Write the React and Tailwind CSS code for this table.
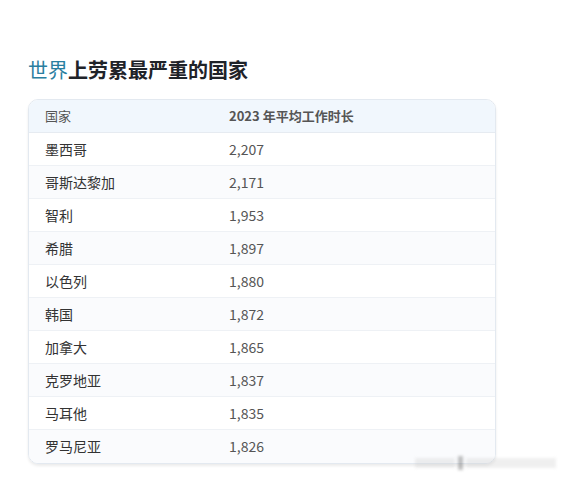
const rows = [
  ['墨西哥', '2,207'],
  ['哥斯达黎加', '2,171'],
  ['智利', '1,953'],
  ['希腊', '1,897'],
  ['以色列', '1,880'],
  ['韩国', '1,872'],
  ['加拿大', '1,865'],
  ['克罗地亚', '1,837'],
  ['马耳他', '1,835'],
  ['罗马尼亚', '1,826'],
];

export default function App() {
  return (
    <div
      className="relative w-[567px] h-[483px] bg-white overflow-hidden"
      style={{ fontFamily: '"Noto Sans CJK SC", "Noto Sans", sans-serif' }}
    >
      <div className="pl-[28px] pt-[56px]">
        <h1 className="text-[20px] leading-[28px] font-bold text-[#1f2329]">
          <span className="font-normal text-[#2a7ea0]">世界</span>上劳累最严重的国家
        </h1>

        <div className="mt-[15px] w-[468px] rounded-[10px] border border-[#e3e9f0] overflow-hidden shadow-[0_2px_3px_rgba(0,0,0,0.08)]">
          <div className="flex h-[33px] items-center bg-[#f1f7fd] border-b border-[#e6ebf1] text-[13px] text-[#555]">
            <div className="w-[200px] pl-[16px]">国家</div>
            <div className="font-bold">2023 年平均工作时长</div>
          </div>
          {rows.map(([name, hours], i) => (
            <div
              key={name}
              className={
                'flex h-[33px] items-center text-[14px] text-[#333] ' +
                (i % 2 === 1 ? 'bg-[#fafbfd] ' : 'bg-white ') +
                (i < rows.length - 1 ? 'border-b border-[#eef1f5]' : '')
              }
            >
              <div className="w-[200px] pl-[16px]">{name}</div>
              <div className="text-[#555]">{hours}</div>
            </div>
          ))}
        </div>
      </div>

      {/* faint watermark */}
      <div className="absolute left-[415px] top-[456px] flex items-center gap-[3px] opacity-30 blur-[1.5px]">
        <div className="w-[40px] h-[10px] bg-[#ccc]" />
        <div className="w-[5px] h-[14px] bg-[#333]" />
        <div className="w-[90px] h-[10px] bg-[#ccc]" />
      </div>
    </div>
  );
}
